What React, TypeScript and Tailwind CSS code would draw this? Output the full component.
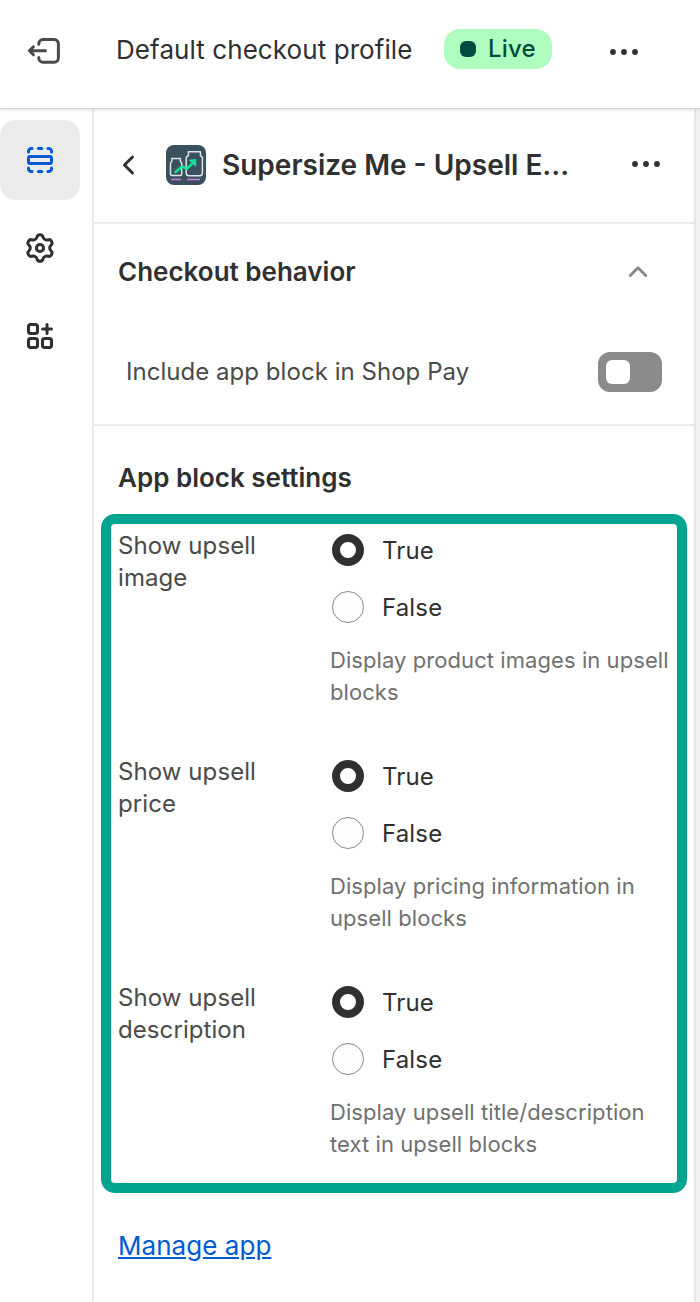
import React from "react";

function ExitIcon() {
  return (
    <svg width="40" height="40" viewBox="0 0 40 40" fill="none" stroke="#4a4a4a" strokeWidth="3" strokeLinecap="round" strokeLinejoin="round">
      <path d="M14.8 13.2v-.4a4.2 4.2 0 0 1 4.2-4.2h11.2A4.2 4.2 0 0 1 34.4 12.8v14.2a4.2 4.2 0 0 1-4.2 4.2H19a4.2 4.2 0 0 1-4.2-4.2v-.4" />
      <path d="M21.5 19.8H5.6M9.4 15.8l-4 4 4 4" />
    </svg>
  );
}

function SectionsIcon() {
  return (
    <svg width="40" height="40" viewBox="0 0 40 40" fill="none" stroke="#005bd3" strokeWidth="3" strokeLinecap="round" strokeLinejoin="round">
      <rect x="8.5" y="16.5" width="23" height="7" rx="1.7" />
      <path d="M8.5 12.1v-.8a2.8 2.8 0 0 1 2.8-2.8h.8M18.4 8.5h3.4M27.9 8.5h.8a2.8 2.8 0 0 1 2.8 2.8v.8M8.5 27.9v.8a2.8 2.8 0 0 0 2.8 2.8h.8M18.4 31.5h3.4M27.9 31.5h.8a2.8 2.8 0 0 0 2.8-2.8v-.8" />
    </svg>
  );
}

function GearIcon() {
  return (
    <svg width="40" height="40" viewBox="-20 -20 40 40" fill="none" stroke="#303030" strokeWidth="3" strokeLinecap="round" strokeLinejoin="round">
      <path d="M2.8 -11.4Q3.2 -9.2 4.8 -8.6Q6.2 -7.5 8.4 -8.2Q10.2 -8.9 11.5 -6.7Q12.8 -4.4 11.3 -3.2Q9.7 -1.8 9.7 0Q9.7 1.8 11.3 3.2Q12.8 4.4 11.5 6.7Q10.2 8.9 8.4 8.2Q6.2 7.5 4.8 8.6Q3.2 9.2 2.8 11.4Q2.4 13.3 0 13.3Q-2.4 13.3 -2.8 11.4Q-3.2 9.2 -4.8 8.6Q-6.2 7.5 -8.4 8.2Q-10.2 8.9 -11.5 6.7Q-12.8 4.4 -11.3 3.2Q-9.7 1.8 -9.7 0Q-9.7 -1.8 -11.3 -3.2Q-12.8 -4.4 -11.5 -6.7Q-10.2 -8.9 -8.4 -8.2Q-6.2 -7.5 -4.8 -8.6Q-3.2 -9.2 -2.8 -11.4Q-2.4 -13.3 0 -13.3Q2.4 -13.3 2.8 -11.4Z" />
      <circle r="3.6" strokeWidth="3" />
    </svg>
  );
}

function AppsIcon() {
  return (
    <svg width="40" height="40" viewBox="0 0 40 40" fill="none" stroke="#303030" strokeWidth="3.1" strokeLinecap="round" strokeLinejoin="round">
      <rect x="8.5" y="8.5" width="9" height="9" rx="2.2" />
      <rect x="8.5" y="22.5" width="9" height="9" rx="2.2" />
      <rect x="22.5" y="22.5" width="9" height="9" rx="2.2" />
      <path d="M27 8.6v8.8M22.6 13h8.8" strokeWidth="3" />
    </svg>
  );
}

function DotsIcon() {
  return (
    <svg width="40" height="40" viewBox="0 0 40 40" fill="#303030">
      <circle cx="9" cy="20" r="2.9" />
      <circle cx="20" cy="20" r="2.9" />
      <circle cx="31" cy="20" r="2.9" />
    </svg>
  );
}

function AppLogo() {
  return (
    <svg width="40" height="40" viewBox="0 0 40 40" fill="none" strokeLinejoin="round">
      <rect width="40" height="40" rx="8" fill="#3a505c" />
      <path d="M5.8 13.4h8.6v3l1.3 1.6v11q0 1.5-1.5 1.5H6q-1.5 0-1.5-1.5V18l1.3-1.6zM22.4 6.8h12v3.8l2 1.8v15.6q0 2.8-2.8 2.8H23q-2.8 0-2.8-2.8V12.4l2.2-1.8z" stroke="#dfe4e7" strokeWidth="1.5" />
      <path d="M8.8 27.8l7.6-6.6 4.2 2.8 6.6-6.4" stroke="#12e29a" strokeWidth="2.5" />
      <path d="M23.4 15.2l6.4-.6v6.6z" fill="#12e29a" stroke="#12e29a" />
      <path d="M5.4 34.5H15M21 34.5h13" stroke="#c77fd6" strokeWidth="1.3" />
    </svg>
  );
}

function Radio({ label, checked = false }: { label: string; checked?: boolean }) {
  return (
    <label className="flex h-8 items-center gap-[18px] text-[24px] leading-8 text-[#303030]">
      <span
        className={
          checked
            ? "size-8 rounded-full border-8 border-[#303030] bg-white"
            : "size-8 rounded-full border border-[#8a8a8a] bg-[#fdfdfd]"
        }
      />
      <span className="pt-0.5 tracking-[0.15px]">{label}</span>
    </label>
  );
}

const settings = [
  { label: ["Show upsell", "image"], help: ["Display product images in upsell", "blocks"] },
  { label: ["Show upsell", "price"], help: ["Display pricing information in", "upsell blocks"] },
  { label: ["Show upsell", "description"], help: ["Display upsell title/description", "text in upsell blocks"] },
];

export default function App() {
  return (
    <div className="flex h-[1302px] w-[700px] flex-col overflow-hidden bg-white font-['Inter',sans-serif] text-[#303030]">
      <header className="z-10 flex h-[108px] shrink-0 items-start bg-white shadow-[0_1px_0_#d4d4d4,0_2px_4px_rgba(0,0,0,0.12)]">
        <div className="ml-6 mt-[31px]"><ExitIcon /></div>
        <h1 className="ml-[52px] mt-[34px] w-[328px] whitespace-nowrap text-[26px] leading-8 tracking-[0.08px]">Default checkout profile</h1>
        <div className="mt-[29px] flex h-10 w-[108px] items-center rounded-2xl bg-[#affebf] pl-4 text-[24px] font-medium text-[#014b40]">
          <span className="size-4 rounded-[6px] bg-[#014b40]" />
          <span className="ml-3 tracking-[0.2px]">Live</span>
        </div>
        <div className="ml-[52px] mt-8"><DotsIcon /></div>
      </header>
      <div className="flex flex-1">
        <nav className="flex w-[94px] shrink-0 flex-col gap-2 border-r-2 border-[#ebebeb] pt-3">
          <button className="flex size-20 items-center justify-center rounded-2xl bg-[#ebebeb]"><SectionsIcon /></button>
          <button className="flex size-20 items-center justify-center"><GearIcon /></button>
          <button className="flex size-20 items-center justify-center"><AppsIcon /></button>
        </nav>
        <main className="w-[600px] shrink-0">
          <section className="flex h-[116px] items-center border-b-2 border-[#ebebeb]">
            <svg className="ml-6" width="20" height="40" viewBox="0 0 20 40" fill="none" stroke="#303030" strokeWidth="3" strokeLinecap="round" strokeLinejoin="round">
              <path d="M14.5 12L6.5 20l8 8" />
            </svg>
            <div className="ml-7"><AppLogo /></div>
            <h2 className="ml-4 w-[404px] whitespace-nowrap text-[28px] font-semibold">Supersize Me - Upsell E...</h2>
            <div className="-mr-px mb-0.5"><DotsIcon /></div>
          </section>
          <section className="h-[202px] border-b-2 border-[#ebebeb] pl-6 pr-8 pt-7">
            <div className="flex h-10 items-center justify-between">
              <h3 className="text-[26px] font-semibold leading-8">Checkout behavior</h3>
              <svg className="mr-1" width="40" height="40" viewBox="0 0 40 40" fill="none" stroke="#8a8a8a" strokeWidth="3" strokeLinecap="round" strokeLinejoin="round">
                <path d="M12.3 23.5L20 15.8l7.7 7.7" />
              </svg>
            </div>
            <div className="mt-[60px] flex h-10 items-center justify-between pl-2">
              <span className="text-[24px] tracking-[0.04px] text-[#4a4a4a]">Include app block in Shop Pay</span>
              <span className="flex h-10 w-16 items-center rounded-xl bg-[#8a8a8a] pl-2">
                <span className="size-6 rounded-[6px] bg-white" />
              </span>
            </div>
          </section>
          <section>
            <h3 className="ml-6 mt-9 text-[26px] font-semibold leading-8">App block settings</h3>
            <div className="ml-[7px] mt-5 flex h-[679px] w-[586px] flex-col gap-[34px] rounded-[14px] border-10 border-[#00a591] pl-[7px] pt-[6px]">
              {settings.map((s) => (
                <div key={s.label[1]} className="flex h-48">
                  <div className="w-[212px] shrink-0 text-[24px] leading-8 tracking-[0.08px] text-[#4a4a4a]">
                    {s.label.map((line) => <div key={line}>{line}</div>)}
                  </div>
                  <div className="pt-1">
                    <div className="flex flex-col gap-[25px] pl-0.5">
                      <Radio label="True" checked />
                      <Radio label="False" />
                    </div>
                    <div className="mt-[21px] whitespace-nowrap text-[22px] leading-8 tracking-[0.07px] text-[#707070]">
                      {s.help.map((line) => <div key={line}>{line}</div>)}
                    </div>
                  </div>
                </div>
              ))}
            </div>
            <a className="ml-6 mt-[37px] block w-fit text-[26px] leading-8 tracking-[0.05px] text-[#005bd3] underline">Manage app</a>
          </section>
        </main>
        <div className="flex-1 border-l-2 border-[#e6e6e6] bg-[#f1f1f1]" />
      </div>
    </div>
  );
}
